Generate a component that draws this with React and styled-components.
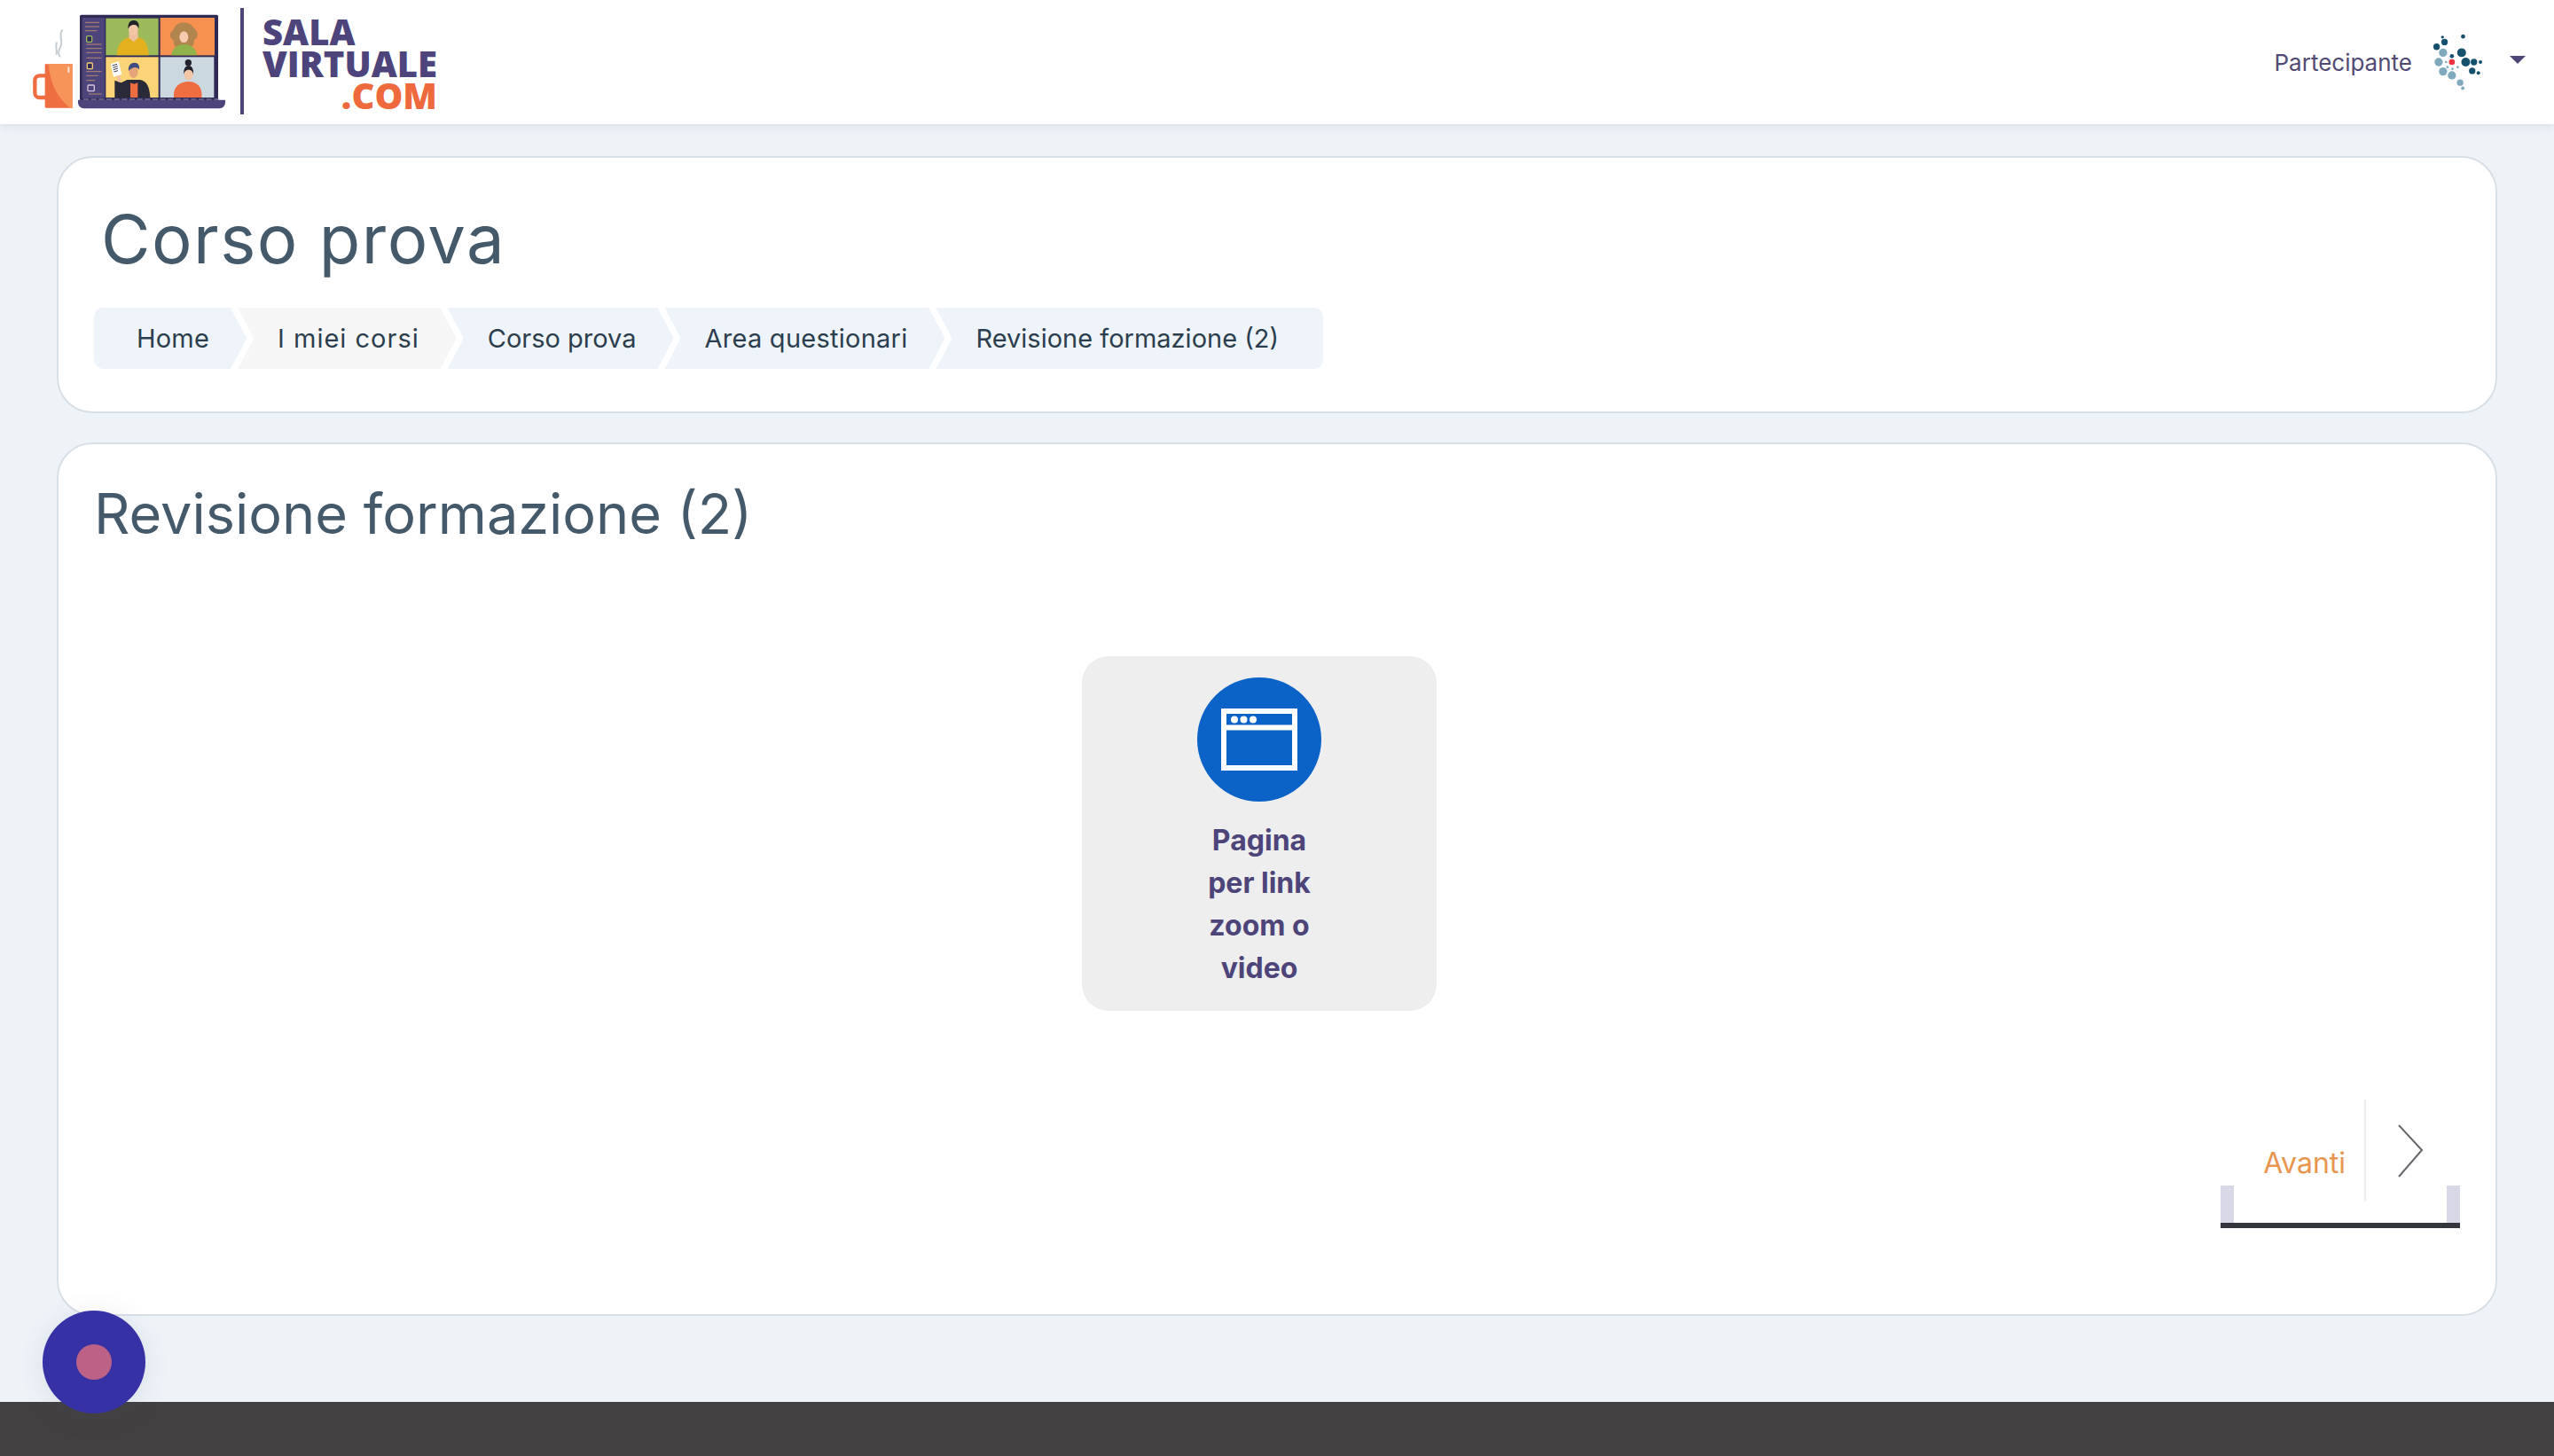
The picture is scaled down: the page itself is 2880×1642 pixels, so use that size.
import styled, { createGlobalStyle } from "styled-components";

const crumbs = [
  { label: "Home", spacing: 0.2 },
  { label: "I miei corsi", spacing: 1 },
  { label: "Corso prova", spacing: 0 },
  { label: "Area questionari", spacing: 0.25 },
  { label: "Revisione formazione (2)", spacing: 0 },
];

const darkDots = [
  [770, 147, 11], [743, 163, 11], [828, 183, 15], [842, 215, 15], [870, 215, 11],
  [864, 245, 11], [885, 252, 6], [892, 215, 6], [833, 128, 7], [763, 130, 5], [795, 195, 7],
];
const lightDots = [
  [765, 183, 14], [750, 215, 14], [765, 247, 14], [795, 260, 14], [823, 285, 11], [832, 304, 6],
  [775, 215, 4], [815, 232, 4], [780, 232, 4], [797, 238, 4],
];

const LogoArt = () => (
  <LogoSvg viewBox="0 0 750 420">
    {/* mug */}
    <path d="M94 256H74a16 16 0 0 0-16 16v42a16 16 0 0 0 16 16h20" fill="none" stroke="#ee6e42" strokeWidth="13" />
    <path d="M92 217h93v148H96a4 4 0 0 1-4-4z" fill="#ee6e42" />
    <path d="M104 217h81v148h-8c-40-30-68-80-73-148z" fill="#f6945a" />
    <rect x="169" y="225" width="6" height="22" rx="3" fill="#fbe3d3" />
    <path d="M150 102c-14 22 8 34-8 62 -5 10-4 20 0 26M132 145c-8 14 4 24-1 38" fill="none" stroke="#c6cdd2" strokeWidth="6" strokeLinecap="round" />
    {/* laptop */}
    <rect x="210" y="50" width="468" height="290" rx="5" fill="#2f2a55" />
    <rect x="218" y="60" width="76" height="272" fill="#4d447c" />
    <path d="M228 76h48M228 90h48M228 104h40M232 150h52M232 164h52M232 178h52M232 196h52M232 242h52M232 256h40M232 272h30M240 318h44" stroke="#b58a6a" strokeWidth="3" />
    <rect x="233" y="122" width="18" height="20" rx="3" fill="#2f2a55" stroke="#9cba5a" strokeWidth="4" />
    <rect x="235" y="213" width="18" height="20" rx="3" fill="#2f2a55" stroke="#f6ce6f" strokeWidth="4" />
    <rect x="237" y="288" width="22" height="20" rx="3" fill="#4d447c" stroke="#d7c5dc" strokeWidth="4" />
    <rect x="298" y="62" width="178" height="125" fill="#9cba5a" />
    <rect x="482" y="60" width="184" height="127" fill="#f6914f" />
    <rect x="298" y="193" width="178" height="137" fill="#fbd477" />
    <rect x="482" y="193" width="182" height="137" fill="#ccd8e0" />
    {/* man in yellow sweater */}
    <path d="M335 187c2-34 16-55 42-60h32c24 5 32 28 34 60z" fill="#e4b11e" />
    <path d="M376 128l16 14 15-14v-18h-31z" fill="#eec0a0" />
    <ellipse cx="391" cy="100" rx="16" ry="20" fill="#f3c7a5" />
    <path d="M374 98c-3-22 8-29 18-29s21 6 17 28c-4-10-8-14-16-13-8 0-15 3-19 14z" fill="#232229" />
    {/* woman with long hair */}
    <path d="M560 76c26 0 33 16 42 26 12 10 6 28-6 34 4 20-14 30-30 26-26 8-42-4-38-24-14-8-18-26-2-36 4-14 18-26 34-26z" fill="#b2854f" />
    <path d="M520 187c2-22 16-32 34-36h16c20 4 34 14 36 36z" fill="#8fb24a" />
    <ellipse cx="562" cy="125" rx="15" ry="19" fill="#f6cbb0" />
    {/* man with sheet */}
    <path d="M328 330v-58l22 8 20-10h44c22 4 32 22 34 60z" fill="#2b2a38" />
    <path d="M381 330v-50l13 4 12-4v50z" fill="#ee6e42" />
    <ellipse cx="392" cy="244" rx="15" ry="20" fill="#e6a47a" />
    <path d="M375 240c-2-20 8-28 20-28 12 0 18 8 16 24-6-10-22-12-36 4z" fill="#3f4c80" />
    <path d="M314 216l28-8 10 44-28 8z" fill="#fff" />
    <path d="M320 222l16-5M322 229l16-5M323 236l16-5M325 243l14-4" stroke="#3c3c4c" strokeWidth="3" />
    <path d="M334 258l10-4 8 18-12 6z" fill="#f0c19f" />
    {/* woman with bun */}
    <circle cx="577" cy="212" r="11" fill="#23212c" />
    <path d="M528 330c-4-36 20-54 50-54 30 0 48 20 44 54z" fill="#ee6e42" />
    <ellipse cx="578" cy="252" rx="15" ry="19" fill="#f3c7a5" />
    <path d="M562 252c-2-20 6-30 16-30s18 10 16 30c-2-12-8-16-16-16s-14 4-16 16z" fill="#23212c" />
    {/* base */}
    <path d="M204 338h498v8c0 12-8 21-20 21H224c-12 0-20-9-20-21z" fill="#4d447c" />
    <path d="M222 336H690" stroke="#8f8ab0" strokeWidth="3" strokeDasharray="18 8" />
  </LogoSvg>
);

const Avatar = () => (
  <AvatarSvg viewBox="720 110 190 210">
    {lightDots.map(([x, y, r]) => (
      <circle key={`${x}-${y}`} cx={x} cy={y} r={r} fill="#7faabe" />
    ))}
    {darkDots.map(([x, y, r]) => (
      <circle key={`${x}-${y}`} cx={x} cy={y} r={r} fill="#15506c" />
    ))}
    <circle cx="795" cy="215" r="10" fill="#ee3340" />
  </AvatarSvg>
);

const App = () => {
  return (
    <Page>
      <GlobalStyle />
      <Header>
        <Logo>
          <LogoArt />
          <LogoRule />
          <LogoText>
            <LogoLine>SALA</LogoLine>
            <LogoLine>VIRTUALE</LogoLine>
            <LogoLine $accent>.COM</LogoLine>
          </LogoText>
        </Logo>
        <UserMenu>
          <UserName>Partecipante</UserName>
          <Avatar />
          <Caret />
        </UserMenu>
      </Header>

      <Main>
        <TitleCard>
          <CourseTitle>Corso prova</CourseTitle>
          <Breadcrumb>
            {crumbs.map((crumb, i) => (
              <Crumb
                key={crumb.label}
                $first={i === 0}
                $last={i === crumbs.length - 1}
                $hover={i === 1}
                $spacing={crumb.spacing}
              >
                {crumb.label}
              </Crumb>
            ))}
          </Breadcrumb>
        </TitleCard>

        <ContentCard>
          <SectionTitle>Revisione formazione (2)</SectionTitle>
          <TileRow>
            <Tile>
              <TileIcon>
                <svg width="86" height="70" viewBox="0 0 86 70">
                  <rect x="3" y="3" width="80" height="64" fill="none" stroke="#fff" strokeWidth="6" />
                  <path d="M3 21.5H83" stroke="#fff" strokeWidth="6" />
                  <circle cx="15" cy="12.5" r="4" fill="#fff" />
                  <circle cx="25.5" cy="12.5" r="4" fill="#fff" />
                  <circle cx="36" cy="12.5" r="4" fill="#fff" />
                </svg>
              </TileIcon>
              <TileLabel>
                Pagina
                <br />
                per link
                <br />
                zoom o
                <br />
                video
              </TileLabel>
            </Tile>
          </TileRow>
          <NavRow>
            <NextButton>
              <NextLabel>Avanti</NextLabel>
              <NextArrow>
                <svg width="30" height="62" viewBox="0 0 30 62">
                  <path d="M2 2L28 30L2 60" fill="none" stroke="#66666c" strokeWidth="2" />
                </svg>
              </NextArrow>
            </NextButton>
          </NavRow>
        </ContentCard>
      </Main>

      <Footer />
      <Bubble>
        <BubbleDot />
      </Bubble>
    </Page>
  );
};

const GlobalStyle = createGlobalStyle`
  body {
    margin: 0;
    background: #eef3f8;
    font-family: "Inter", "Liberation Sans", sans-serif;
  }
`;

const Page = styled.div`
  display: flex;
  flex-direction: column;
  min-height: 1642px;
`;

const Header = styled.header`
  display: flex;
  align-items: center;
  justify-content: space-between;
  height: 140px;
  padding: 0 32px 0 20px;
  background: #fff;
  box-shadow: 0 2px 10px rgba(60, 70, 80, 0.12);
`;

const Logo = styled.div`
  display: flex;
  align-items: center;
`;

const LogoSvg = styled.svg`
  width: 250px;
  height: 140px;
  display: block;
  filter: blur(0.5px);
`;

const LogoRule = styled.div`
  width: 4px;
  height: 120px;
  margin: -2px 0 0 1px;
  background: #4d447c;
`;

const LogoText = styled.div`
  display: flex;
  flex-direction: column;
  margin-left: 21px;
  padding-top: 4px;
  font-family: "Open Sans", sans-serif;
  font-weight: 800;
  font-size: 40px;
  line-height: 36px;
`;

const LogoLine = styled.span`
  color: ${(props) => (props.$accent ? "#ee6a3c" : "#4d447c")};
  align-self: ${(props) => (props.$accent ? "flex-end" : "flex-start")};
`;

const UserMenu = styled.div`
  display: flex;
  align-items: center;
`;

const UserName = styled.span`
  font-size: 26px;
  color: #504a74;
`;

const AvatarSvg = styled.svg`
  width: 63px;
  height: 70px;
  margin-left: 20px;
  filter: blur(0.5px);
`;

const Caret = styled.div`
  width: 0;
  height: 0;
  margin: -5px 0 0 27px;
  border-left: 9px solid transparent;
  border-right: 9px solid transparent;
  border-top: 9px solid #4f4678;
`;

const Main = styled.main`
  flex: 1;
  display: flex;
  flex-direction: column;
  gap: 33px;
  padding: 36px 64px 0;
`;

const Card = styled.section`
  box-sizing: border-box;
  background: #fff;
  border: 2px solid #d8dfe5;
  border-radius: 40px;
`;

const TitleCard = styled(Card)`
  height: 290px;
  padding: 43px 40px 0;
`;

const CourseTitle = styled.h1`
  margin: 0 0 0 8px;
  font-size: 76px;
  font-weight: 400;
  letter-spacing: 1.5px;
  line-height: 96px;
  color: #44596a;
`;

const Breadcrumb = styled.nav`
  display: flex;
  height: 69px;
  margin-top: 30px;
`;

const Crumb = styled.span`
  display: flex;
  align-items: center;
  height: 100%;
  margin-left: ${(props) => (props.$first ? "0" : "-10px")};
  padding: 0 ${(props) => (props.$last ? "50px" : "42px")} 0 ${(props) => (props.$first ? "48px" : "45px")};
  font-size: 29px;
  letter-spacing: ${(props) => props.$spacing}px;
  color: #2c3e4e;
  background: ${(props) => (props.$hover ? "#f6f6f6" : "#eef4fa")};
  border-radius: ${(props) => (props.$first ? "10px 0 0 10px" : props.$last ? "0 10px 10px 0" : "0")};
  clip-path: ${(props) =>
    props.$last
      ? "polygon(0 0, 100% 0, 100% 100%, 0 100%, 18px 50%)"
      : props.$first
        ? "polygon(0 0, calc(100% - 18px) 0, 100% 50%, calc(100% - 18px) 100%, 0 100%)"
        : "polygon(0 0, calc(100% - 18px) 0, 100% 50%, calc(100% - 18px) 100%, 0 100%, 18px 50%)"};
`;

const ContentCard = styled(Card)`
  height: 985px;
  padding: 36px 40px 0;
`;

const SectionTitle = styled.h2`
  margin: 0;
  font-size: 63px;
  font-weight: 400;
  line-height: 84px;
  color: #44596a;
`;

const TileRow = styled.div`
  display: flex;
  justify-content: center;
  margin-top: 119px;
  padding-right: 40px;
`;

const Tile = styled.div`
  box-sizing: border-box;
  display: flex;
  flex-direction: column;
  align-items: center;
  width: 400px;
  height: 400px;
  padding-top: 24px;
  background: #eeeeef;
  border-radius: 30px;
`;

const TileIcon = styled.div`
  display: flex;
  align-items: center;
  justify-content: center;
  width: 140px;
  height: 140px;
  border-radius: 50%;
  background: #0b63c8;
`;

const TileLabel = styled.div`
  margin-top: 20px;
  font-size: 32px;
  font-weight: 700;
  line-height: 48px;
  text-align: center;
  color: #4d457a;
`;

const NavRow = styled.div`
  display: flex;
  justify-content: flex-end;
  margin-top: 100px;
`;

const NextButton = styled.div`
  position: relative;
  display: flex;
  width: 270px;
  height: 145px;
  border-bottom: 6px solid #34363e;
  box-sizing: border-box;

  &::before,
  &::after {
    content: "";
    position: absolute;
    bottom: 0;
    width: 15px;
    height: 42px;
    background: #d9d8e7;
  }
  &::before {
    left: 0;
  }
  &::after {
    right: 0;
  }
`;

const NextLabel = styled.span`
  flex: 1;
  align-self: flex-start;
  padding: 49px 21px 0 0;
  font-size: 32px;
  line-height: 46px;
  text-align: right;
  color: #e8954f;
`;

const NextArrow = styled.div`
  box-sizing: border-box;
  width: 108px;
  height: 115px;
  padding: 27px 0 0 35px;
  border-left: 2px solid #eeeeee;
`;

const Footer = styled.footer`
  height: 61px;
  background: #424040;
`;

const Bubble = styled.div`
  position: fixed;
  left: 48px;
  top: 1478px;
  display: flex;
  align-items: center;
  justify-content: center;
  width: 116px;
  height: 116px;
  border-radius: 50%;
  background: #3631a5;
  box-shadow: 0 4px 30px rgba(80, 80, 120, 0.12);
`;

const BubbleDot = styled.div`
  width: 40px;
  height: 40px;
  border-radius: 50%;
  background: #bc6287;
`;

export default App;
